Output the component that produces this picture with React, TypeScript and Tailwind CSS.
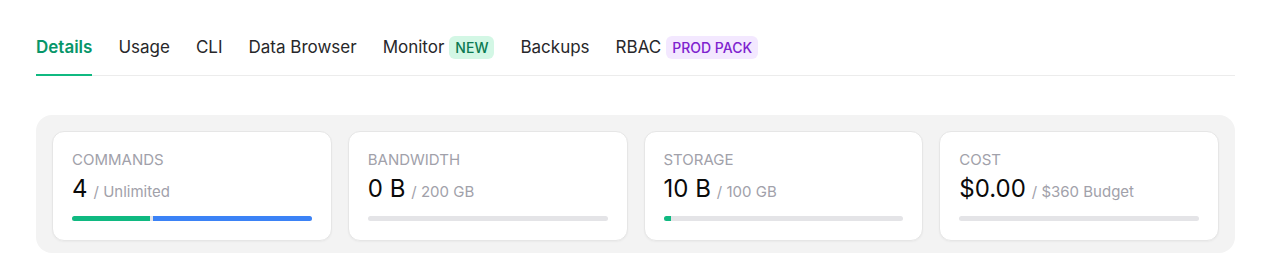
import React from "react"

interface Tab {
  label: string
  badge?: { text: string; className: string }
  active?: boolean
}

const tabs: Tab[] = [
  { label: "Details", active: true },
  { label: "Usage" },
  { label: "CLI" },
  { label: "Data Browser" },
  { label: "Monitor", badge: { text: "NEW", className: "bg-[#d3f7e5] text-[#0b7a52]" } },
  { label: "Backups" },
  { label: "RBAC", badge: { text: "PROD PACK", className: "bg-[#f3e8ff] text-[#7e22ce]" } },
]

interface Stat {
  label: string
  value: string
  limit: string
  segments: { width: string; className: string }[]
}

const stats: Stat[] = [
  {
    label: "Commands",
    value: "4",
    limit: "/ Unlimited",
    segments: [
      { width: "w-[78px]", className: "bg-[#10b981]" },
      { width: "flex-1", className: "bg-[#3b82f6]" },
    ],
  },
  { label: "Bandwidth", value: "0 B", limit: "/ 200 GB", segments: [] },
  {
    label: "Storage",
    value: "10 B",
    limit: "/ 100 GB",
    segments: [{ width: "w-[7px]", className: "bg-[#10b981]" }],
  },
  { label: "Cost", value: "$0.00", limit: "/ $360 Budget", segments: [] },
]

function StatCard({ stat }: { stat: Stat }) {
  return (
    <div className="flex-1 rounded-xl border border-[#e6e6e6] bg-white px-[19px] pt-[18px] pb-[19px] shadow-[0_1px_2px_rgba(0,0,0,0.04)]">
      <div className="text-[15px] leading-5 uppercase text-[#a1a1aa]">{stat.label}</div>
      <div className="mt-[3px] flex items-baseline gap-[6px] leading-8">
        <span className="text-[24px] text-[#0a0a0a]">{stat.value}</span>
        <span className="text-[15px] text-[#a1a1aa]">{stat.limit}</span>
      </div>
      <div className="mt-[8px] flex h-[5px] gap-[3px] overflow-hidden rounded-full bg-[#e4e4e7]">
        {stat.segments.map((s, i) => (
          <div key={i} className={`${s.width} ${s.className} h-full`} />
        ))}
      </div>
    </div>
  )
}

export default function App() {
  return (
    <div className="min-h-screen bg-white px-9 pt-[35px] font-['Inter',sans-serif]">
      {/* Tabs */}
      <nav className="flex items-end gap-[26px] border-b border-[#ececec]">
        {tabs.map((tab) => (
          <div
            key={tab.label}
            className={`flex items-center gap-[5px] pb-[15px] -mb-px border-b-2 ${
              tab.active ? "border-[#10b981]" : "border-transparent"
            }`}
          >
            <span
              className={`text-[17px] leading-6 ${
                tab.active ? "font-semibold text-[#079669]" : "text-[#27272a]"
              }`}
            >
              {tab.label}
            </span>
            {tab.badge && (
              <span
                className={`rounded-md px-[6px] text-[14px] leading-[23px] font-medium ${tab.badge.className}`}
              >
                {tab.badge.text}
              </span>
            )}
          </div>
        ))}
      </nav>

      {/* Usage stats */}
      <div className="mt-[39px] flex gap-4 rounded-2xl bg-[#f3f3f3] px-4 pt-4 pb-3">
        {stats.map((s) => (
          <StatCard key={s.label} stat={s} />
        ))}
      </div>
    </div>
  )
}
